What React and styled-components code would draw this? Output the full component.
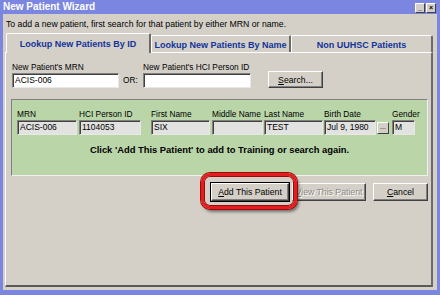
import React from 'react'
import styled, { createGlobalStyle } from 'styled-components'

const GlobalStyle = createGlobalStyle`
  html, body {
    margin: 0;
    padding: 0;
    overflow: hidden;
    background: #7b86e0;
  }
  body {
    font-family: Tahoma, "Liberation Sans", Arial, sans-serif;
  }
`

const Frame = styled.div`
  width: 440px;
  height: 295px;
  box-sizing: border-box;
  background: #7b86e0;
  display: flex;
  flex-direction: column;
  padding: 0 3px 5px 3px;
`

const TitleBar = styled.div`
  height: 14px;
  display: flex;
  align-items: center;
  justify-content: space-between;
  color: #fff;
  font-family: "Liberation Sans", Arial, sans-serif;
  font-weight: bold;
  font-size: 10px;
  padding: 0 1px 0 0;
`

const TitleText = styled.span`
  line-height: 14px;
`

const TitleButtons = styled.div`
  display: flex;
  gap: 1px;
  margin-top: 1px;
`

const TitleButton = styled.div`
  width: 8px;
  height: 8px;
  background: #d4d0c8;
  border-top: 1px solid #fff;
  border-left: 1px solid #fff;
  border-right: 1px solid #404040;
  border-bottom: 1px solid #404040;
  color: #000;
  font-size: 7px;
  line-height: 7px;
  text-align: center;
  font-weight: bold;
  overflow: hidden;
`

const Content = styled.div`
  flex: 1;
  background: #d4d0c8;
  display: flex;
  flex-direction: column;
  padding: 0 4px 3px 2px;
  font-family: "Liberation Sans", Arial, sans-serif;
  color: #000;
`

const Intro = styled.div`
  font-size: 8.7px;
  line-height: 11px;
  padding: 5px 0 0 1px;
  height: 14px;
`

const TabStrip = styled.div`
  display: flex;
  align-items: flex-end;
  height: 19px;
  padding-left: 1px;
  position: relative;
  z-index: 1;
`

const Tab = styled.div`
  box-sizing: border-box;
  width: ${p => p.$w}px;
  height: ${p => (p.$active ? 20 : 17)}px;
  margin-bottom: ${p => (p.$active ? -1 : 0)}px;
  background: #d4d0c8;
  border-top: 1px solid #fff;
  border-left: 1px solid #fff;
  border-right: 2px solid #6b6b6b;
  border-radius: 2px 2px 0 0;
  display: flex;
  align-items: center;
  justify-content: center;
  color: #12339a;
  font-weight: bold;
  font-size: 9px;
  padding-top: ${p => (p.$active ? 0 : 1)}px;
`

const Panel = styled.div`
  flex: 1;
  box-sizing: border-box;
  border-top: 1px solid #fff;
  border-left: 1px solid #fff;
  border-right: 2px solid #6b6b6b;
  border-bottom: 2px solid #5a5a5a;
  padding: 9px 4px 0 6px;
  display: flex;
  flex-direction: column;
`

const SearchRow = styled.div`
  display: flex;
  align-items: flex-end;
`

const Field = styled.div`
  display: flex;
  flex-direction: column;
  width: ${p => p.$w}px;
  margin-left: ${p => p.$ml || 0}px;
`

const Label = styled.div`
  font-size: 8.3px;
  line-height: 10px;
  height: 11px;
  white-space: nowrap;
`

const TextBox = styled.div`
  box-sizing: border-box;
  height: 15px;
  background: ${p => (p.$readOnly ? '#e2e2e0' : '#fff')};
  border-top: 1px solid #808080;
  border-left: 1px solid #808080;
  border-right: 1px solid #e8e8e8;
  border-bottom: 1px solid #e8e8e8;
  box-shadow: inset 1px 1px 0 #404040;
  font-size: 8.5px;
  line-height: 13px;
  padding-left: 2px;
  white-space: nowrap;
  overflow: hidden;
  display: flex;
  align-items: center;
`

const OrLabel = styled.span`
  box-sizing: border-box;
  width: 24px;
  font-size: 8.3px;
  line-height: 15px;
  padding-left: 4px;
`

const Button = styled.div`
  box-sizing: border-box;
  width: ${p => p.$w}px;
  height: ${p => p.$h || 18}px;
  margin-left: ${p => p.$ml || 0}px;
  background: #d4d0c8;
  border-top: 1px solid #fff;
  border-left: 1px solid #fff;
  border-right: 1px solid #404040;
  border-bottom: 1px solid #404040;
  box-shadow: inset -1px -1px 0 #808080;
  display: flex;
  align-items: center;
  justify-content: center;
  font-size: 8.7px;
  color: ${p => (p.$disabled ? '#8c8a85' : '#000')};
  text-shadow: ${p => (p.$disabled ? '1px 1px 0 #fff' : 'none')};
  white-space: nowrap;
  ${p => p.$focus && `outline: 1px solid #000; outline-offset: 0;`}

  u {
    text-decoration: underline;
  }
`

const GreenBox = styled.div`
  box-sizing: border-box;
  margin: 11px 0 0 -1px;
  width: 417px;
  height: 77px;
  background: #bad6a8;
  border-top: 1px solid #808080;
  border-left: 1px solid #808080;
  border-right: 1px solid #f0f0f0;
  border-bottom: 1px solid #f0f0f0;
  padding: 9px 0 0 5px;
  display: flex;
  flex-direction: column;
`

const ResultRow = styled.div`
  display: flex;
  align-items: flex-end;
`

const DateRow = styled.div`
  display: flex;
`

const DotsButton = styled.div`
  box-sizing: border-box;
  width: 12px;
  height: 12px;
  margin: 2px 0 0 1px;
  background: #d4d0c8;
  border-top: 1px solid #fff;
  border-left: 1px solid #fff;
  border-right: 1px solid #404040;
  border-bottom: 1px solid #404040;
  font-size: 7px;
  line-height: 7px;
  text-align: center;
`

const Message = styled.div`
  font-weight: bold;
  font-size: 9.4px;
  text-align: center;
  margin-top: 9px;
  padding-right: 5px;
`

const ButtonRow = styled.div`
  display: flex;
  justify-content: flex-end;
  width: 417px;
  margin: 7px 0 0 -1px;
`

const Highlight = styled.div`
  position: relative;
`

const Ring = styled.div`
  position: absolute;
  left: -10px;
  top: -10px;
  right: -8px;
  bottom: -8px;
  border: 3px solid #e41e1e;
  border-radius: 9px;
  box-shadow: 0 0 0 1px #9a0a0a, inset 0 0 0 1px #9a0a0a, 2px 3px 3px rgba(0, 0, 0, 0.45);
  pointer-events: none;
`

const resultFields = [
  { label: 'MRN', value: 'ACIS-006', w: 60, ml: 0 },
  { label: 'HCI Person ID', value: '1104053', w: 62, ml: 2 },
  { label: 'First Name', value: 'SIX', w: 59, ml: 10 },
  { label: 'Middle Name', value: '', w: 51, ml: 2 },
  { label: 'Last Name', value: 'TEST', w: 59, ml: 1 },
]

export default function App() {
  return (
    <>
      <GlobalStyle />
      <Frame>
        <TitleBar>
          <TitleText>New Patient Wizard</TitleText>
          <TitleButtons>
            <TitleButton>_</TitleButton>
            <TitleButton>×</TitleButton>
          </TitleButtons>
        </TitleBar>
        <Content>
          <Intro>To add a new patient, first search for that patient by either MRN or name.</Intro>
          <TabStrip>
            <Tab $w={145} $active>Lookup New Patients By ID</Tab>
            <Tab $w={140}>Lookup New Patients By Name</Tab>
            <Tab $w={142}>Non UUHSC Patients</Tab>
          </TabStrip>
          <Panel>
            <SearchRow>
              <Field $w={107}>
                <Label>New Patient's MRN</Label>
                <TextBox>ACIS-006</TextBox>
              </Field>
              <OrLabel>OR:</OrLabel>
              <Field $w={108}>
                <Label>New Patient's HCI Person ID</Label>
                <TextBox />
              </Field>
              <Button $w={55} $h={17} $ml={17}>
                <span><u>S</u>earch...</span>
              </Button>
            </SearchRow>
            <GreenBox>
              <ResultRow>
                {resultFields.map(f => (
                  <Field key={f.label} $w={f.w} $ml={f.ml}>
                    <Label>{f.label}</Label>
                    <TextBox $readOnly>{f.value}</TextBox>
                  </Field>
                ))}
                <Field $w={65} $ml={1}>
                  <Label>Birth Date</Label>
                  <DateRow>
                    <TextBox $readOnly style={{ width: 52 }}>Jul 9, 1980</TextBox>
                    <DotsButton>...</DotsButton>
                  </DateRow>
                </Field>
                <Field $w={23} $ml={3}>
                  <Label>Gender</Label>
                  <TextBox $readOnly>M</TextBox>
                </Field>
              </ResultRow>
              <Message>Click 'Add This Patient' to add to Training or search again.</Message>
            </GreenBox>
            <ButtonRow>
              <Highlight>
                <Button $w={78} $focus>
                  <span><u>A</u>dd This Patient</span>
                </Button>
                <Ring />
              </Highlight>
              <Button $w={74} $ml={3} $disabled>
                <span><u>V</u>iew This Patient</span>
              </Button>
              <Button $w={55} $ml={7}>
                <span><u>C</u>ancel</span>
              </Button>
            </ButtonRow>
          </Panel>
        </Content>
      </Frame>
    </>
  )
}
